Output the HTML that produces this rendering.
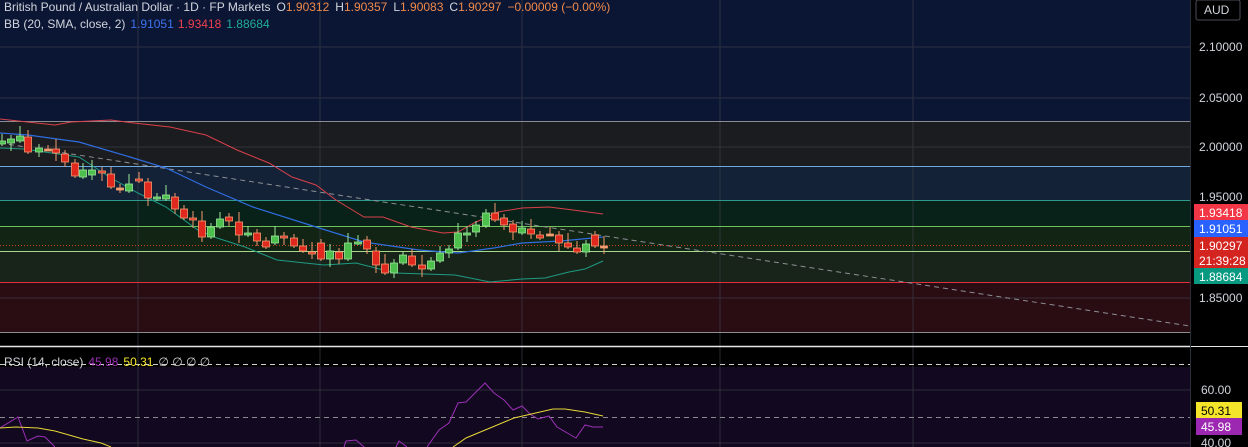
<!DOCTYPE html>
<html><head><meta charset="utf-8"><style>
html,body{margin:0;padding:0;background:#000;width:1248px;height:447px;overflow:hidden}
svg{display:block}
text{font-family:"Liberation Sans",sans-serif}
</style></head><body>
<svg id="s" width="1248" height="447" viewBox="0 0 1248 447" xmlns="http://www.w3.org/2000/svg">
<rect x="0" y="0" width="1190" height="121" fill="#0b1634"/>
<rect x="0" y="121" width="1190" height="45" fill="#1b1c1f"/>
<rect x="0" y="166" width="1190" height="34" fill="#132236"/>
<rect x="0" y="200" width="1190" height="26" fill="#08221a"/>
<rect x="0" y="226" width="1190" height="25" fill="#122414"/>
<rect x="0" y="251" width="1190" height="31" fill="#182419"/>
<rect x="0" y="282" width="1190" height="50" fill="#2a0c13"/>
<rect x="0" y="332" width="1190" height="15" fill="#000"/>
<rect x="0" y="347" width="1190" height="20" fill="#000"/>
<rect x="0" y="367" width="1190" height="80" fill="#12081f"/>
<g stroke="#3a3d48" stroke-width="1" opacity="0.7">
<line x1="138" y1="0" x2="138" y2="447"/><line x1="320" y1="0" x2="320" y2="447"/><line x1="522" y1="0" x2="522" y2="447"/><line x1="720" y1="0" x2="720" y2="447"/><line x1="913" y1="0" x2="913" y2="447"/>
<line x1="0" y1="47" x2="1190" y2="47"/><line x1="0" y1="98" x2="1190" y2="98"/><line x1="0" y1="147" x2="1190" y2="147"/><line x1="0" y1="298" x2="1190" y2="298"/>
<line x1="0" y1="390" x2="1190" y2="390"/><line x1="0" y1="443" x2="1190" y2="443"/>
</g>
<line x1="0" y1="121.5" x2="1190" y2="121.5" stroke="#8a8c92"/>
<line x1="0" y1="166.5" x2="1190" y2="166.5" stroke="#6fa8dc"/>
<line x1="0" y1="200.5" x2="1190" y2="200.5" stroke="#2e9a8c"/>
<line x1="0" y1="226.5" x2="1190" y2="226.5" stroke="#6fc05a"/>
<line x1="0" y1="251.5" x2="1190" y2="251.5" stroke="#a8d88e"/>
<line x1="0" y1="282.5" x2="1190" y2="282.5" stroke="#e03040"/>
<line x1="0" y1="332.5" x2="1190" y2="332.5" stroke="#8a8c92"/>
<line x1="0" y1="346.5" x2="1248" y2="346.5" stroke="#e8e8e8" stroke-width="1.5"/>
<line x1="0" y1="364.5" x2="1190" y2="364.5" stroke="#cfcfcf" stroke-dasharray="5,4"/>
<line x1="0" y1="417.5" x2="1190" y2="417.5" stroke="#8a8a90" stroke-dasharray="5,4"/>
<line x1="0" y1="143" x2="1190" y2="326" stroke="#8d8f96" stroke-width="1" stroke-dasharray="5,4"/>
<line x1="0" y1="245.5" x2="1190" y2="245.5" stroke="#d04020" stroke-dasharray="1,2"/>
<polyline fill="none" stroke="#d9404a" stroke-width="1" points="0,119 55,125 71,122 111,120 134,123 170,127 206,135 237,150 269,163 292,177 316,185 336,200 364,217 383,217 411,227 443,233 458,232 474,223 498,212 522,208 549,207 573,210 603,214"/>
<polyline fill="none" stroke="#2f6de0" stroke-width="1.2" points="0,133 28,135 79,142 130,157 166,168 206,187 253,207 316,227 364,242 419,250 458,253 494,248 522,243 561,241 603,237"/>
<polyline fill="none" stroke="#1e9a84" stroke-width="1" points="0,148 24,149 79,157 111,178 138,193 166,207 198,230 217,238 245,247 277,260 324,265 356,263 395,273 455,275 490,282 522,279 545,278 569,272 585,269 603,261"/>
<g id="c"></g>
<polyline fill="none" stroke="#9c30b8" stroke-width="1" points="0,428 18,417 27,441 38,436 45,437 55,447"/>
<polyline fill="none" stroke="#9c30b8" stroke-width="1" points="344,447 346,441 356,440 364,447"/>
<polyline fill="none" stroke="#9c30b8" stroke-width="1" points="396,447 399,441 407,447"/>
<polyline fill="none" stroke="#9c30b8" stroke-width="1" points="427,447 439,430 449,423 458,403 466,402 485,383 494,393 504,400 513,410 522,406 530,414 538,419 549,416 557,427 576,438 585,425 593,427 603,427"/>
<polyline fill="none" stroke="#e8d838" stroke-width="1" points="0,428 16,427 38,428 55,431 83,439 101,443 111,447"/>
<polyline fill="none" stroke="#e8d838" stroke-width="1" points="453,447 466,438 490,428 514,418 553,409 565,409 585,412 603,416"/>
<rect x="1190" y="0" width="58" height="346" fill="#000"/>
<rect x="1190" y="347" width="58" height="100" fill="#000"/>
<line x1="1190.5" y1="0" x2="1190.5" y2="447" stroke="#2a2e39"/>
<rect x="1196" y="0" width="44" height="20" rx="2" fill="#000" stroke="#4a4e58"/>
<text x="1204" y="14" font-size="12" fill="#d1d4dc">AUD</text>
<g font-size="12" fill="#d1d4dc">
<text x="1199" y="51">2.10000</text><text x="1199" y="102">2.05000</text><text x="1199" y="151">2.00000</text><text x="1199" y="201">1.95000</text><text x="1199" y="302">1.85000</text><text x="1201" y="394">60.00</text><text x="1201" y="447">40.00</text>
</g>
<rect x="1194" y="204" width="54" height="16" fill="#f23645"/><text x="1199" y="217" font-size="12" fill="#fff">1.93418</text>
<rect x="1194" y="220" width="54" height="17" fill="#2962ff"/><text x="1199" y="233" font-size="12" fill="#fff">1.91051</text>
<rect x="1194" y="237" width="54" height="31" fill="#d32420"/><text x="1199" y="250" font-size="12" fill="#fff">1.90297</text><text x="1199" y="265" font-size="12" fill="#fff">21:39:28</text>
<rect x="1194" y="268" width="54" height="16" fill="#089981"/><text x="1199" y="281" font-size="12" fill="#fff">1.88684</text>
<rect x="1196" y="402" width="46" height="16" fill="#f5e52a"/><text x="1201" y="415" font-size="12" fill="#000">50.31</text>
<rect x="1196" y="418" width="46" height="17" fill="#9c27b0"/><text x="1201" y="431" font-size="12" fill="#fff">45.98</text>
<text x="4" y="11" font-size="12" fill="#d1d4dc">British Pound / Australian Dollar · 1D · FP Markets<tspan dx="6">O</tspan><tspan fill="#f08a4a">1.90312</tspan><tspan dx="6">H</tspan><tspan fill="#f08a4a">1.90357</tspan><tspan dx="6">L</tspan><tspan fill="#f08a4a">1.90083</tspan><tspan dx="6">C</tspan><tspan fill="#f08a4a">1.90297</tspan><tspan dx="6" fill="#f08a4a">−0.00009 (−0.00%)</tspan></text>
<text x="4" y="28" font-size="12" fill="#d1d4dc">BB (20, SMA, close, 2)<tspan dx="5" fill="#3d73f0">1.91051</tspan><tspan dx="5" fill="#f04050">1.93418</tspan><tspan dx="5" fill="#22ab94">1.88684</tspan></text>
<text x="4" y="366" font-size="12" fill="#d1d4dc">RSI (14, close)<tspan dx="5" fill="#9c30b8">45.98</tspan><tspan dx="5" fill="#f5e52a">50.31</tspan><tspan dx="5" fill="#cfcfcf">∅ ∅ ∅ ∅</tspan></text>
</svg>
<script>
var d=[[1,144,141],[10,143,139],[19,141,136],[27,137,152],[38,152,148],[47,149,149],[55,149,153],[64,154,162],[74,163,176],[82,177,170],[91,175,170],[101,171,173],[110,174,187],[119,188,188],[128,191,184],[138,179,181],[147,182,198],[156,199,197],[165,199,195],[174,197,209],[183,209,218],[192,218,220],[201,221,237],[210,237,227],[219,227,219],[228,217,221],[238,222,235],[247,235,233],[256,233,241],[265,241,247],[274,243,236],[283,236,237],[293,238,246],[302,246,251],[311,252,254],[320,243,259],[329,259,251],[338,252,259],[347,259,243],[357,243,242],[366,240,249],[375,251,265],[384,264,273],[393,273,263],[402,263,255],[411,256,265],[421,265,269],[430,269,261],[439,261,253],[448,253,249],[457,248,233],[466,234,233],[475,232,225],[485,226,213],[494,213,220],[503,218,225],[512,224,232],[521,233,228],[530,229,234],[539,235,238],[549,234,234],[558,235,243],[567,243,247],[576,248,252],[585,252,244],[594,235,246],[603,246,246]];
var h='';d.forEach(function(c,i){var x=c[0]+1,o=c[1],cl=c[2],t=Math.min(o,cl),b=Math.max(o,cl),up=cl<o,dj=Math.abs(o-cl)<1;
var wt=t-3-(i%4==2?7:i%3==0?4:1),wb=b+2+(i%5==1?6:i%3==1?3:0);
var col=dj?'#f0a070':(up?'#4cbf4c':'#e0281f'),st=up?'#9be89a':'#f59a70';
h+='<line x1="'+x+'" y1="'+wt+'" x2="'+x+'" y2="'+wb+'" stroke="'+st+'" stroke-width="1"/>';
h+='<rect x="'+(x-3.5)+'" y="'+t+'" width="7" height="'+Math.max(2,b-t)+'" fill="'+col+'" stroke="'+st+'" stroke-width="0.8"/>';});
document.getElementById('c').innerHTML=h;
</script>
</body></html>
